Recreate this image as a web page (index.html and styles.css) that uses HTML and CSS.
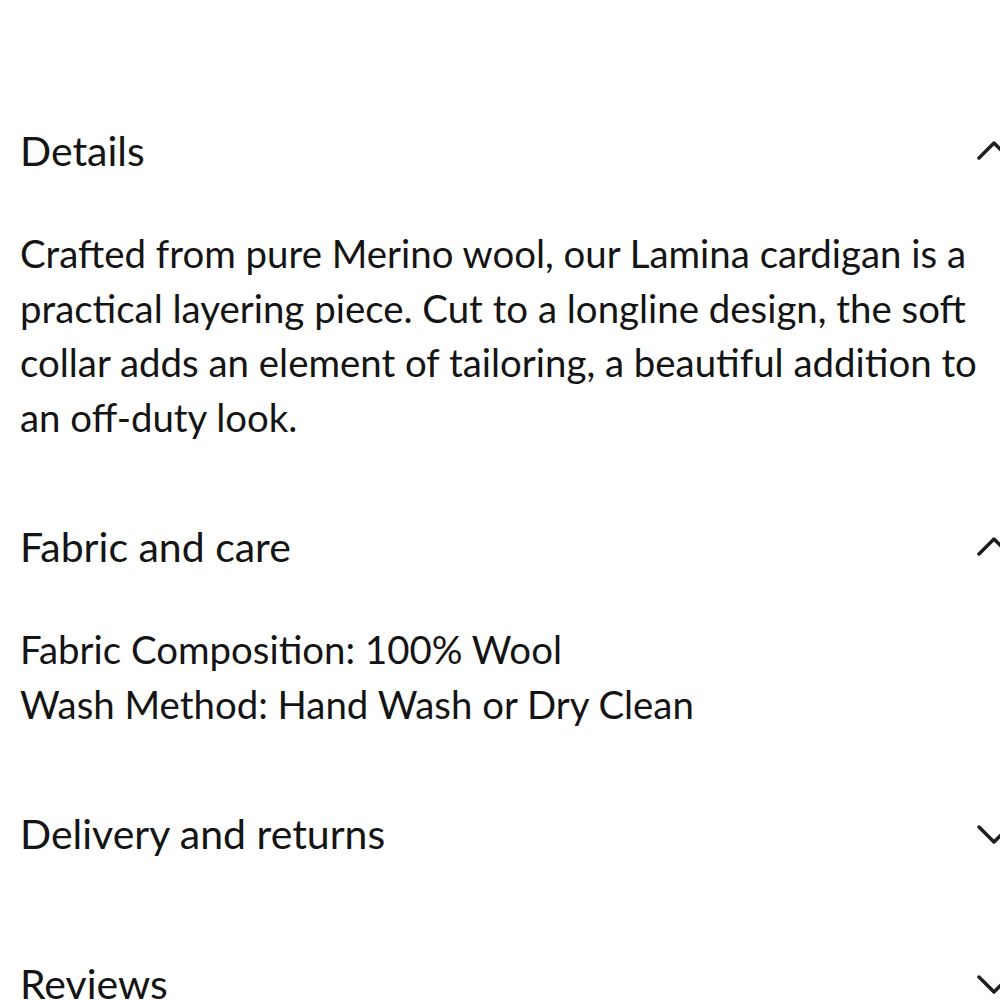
FILE: index.html
```html
<!DOCTYPE html>
<html>
<head>
<meta charset="utf-8">
<link rel="stylesheet" href="styles.css">
</head>
<body>
<div class="accordion">
  <section class="item">
    <div class="row">
      <h2 class="title">Details</h2>
      <svg class="chev" width="34" height="20" viewBox="0 0 34 20"><polyline points="2,17 17,2 32,17" fill="none" stroke="#1e1e1e" stroke-width="3.5" stroke-linecap="round" stroke-linejoin="round"/></svg>
    </div>
    <div class="content">
      <p>Crafted from pure Merino wool, our Lamina cardigan is a practical layering piece. Cut to a longline design, the soft collar adds an element of tailoring, a beautiful addition to an off-duty look.</p>
    </div>
  </section>
  <section class="item">
    <div class="row">
      <h2 class="title">Fabric and care</h2>
      <svg class="chev" width="34" height="20" viewBox="0 0 34 20"><polyline points="2,17 17,2 32,17" fill="none" stroke="#1e1e1e" stroke-width="3.5" stroke-linecap="round" stroke-linejoin="round"/></svg>
    </div>
    <div class="content">
      <p>Fabric Composition: 100% Wool<br>Wash Method: Hand Wash or Dry Clean</p>
    </div>
  </section>
  <section class="item">
    <div class="row">
      <h2 class="title">Delivery and returns</h2>
      <svg class="chev" width="34" height="20" viewBox="0 0 34 20"><polyline points="2,3 17,18 32,3" fill="none" stroke="#1e1e1e" stroke-width="3.5" stroke-linecap="round" stroke-linejoin="round"/></svg>
    </div>
  </section>
  <section class="item">
    <div class="row">
      <h2 class="title">Reviews</h2>
      <svg class="chev" width="34" height="20" viewBox="0 0 34 20"><polyline points="2,3 17,18 32,3" fill="none" stroke="#1e1e1e" stroke-width="3.5" stroke-linecap="round" stroke-linejoin="round"/></svg>
    </div>
  </section>
</div>
</body>
</html>
```
FILE: styles.css
```css
html, body {
  margin: 0;
  padding: 0;
  background: #fff;
  overflow: hidden;
}
body {
  font-family: Lato, "Open Sans", sans-serif;
  color: #141414;
}
.accordion {
  padding: 76px 20px 0 20px;
}
.row {
  display: flex;
  justify-content: space-between;
  align-items: center;
  height: 150px;
  margin-right: -31px;
}
.title {
  margin: 0;
  font-size: 41px;
  font-weight: 400;
  line-height: 1.2;
}
.chev {
  display: block;
  flex: none;
}
.content {
  padding-bottom: 28px;
}
.content p {
  margin: 0;
  font-size: 38.4px;
  line-height: 54.5px;
}
```
